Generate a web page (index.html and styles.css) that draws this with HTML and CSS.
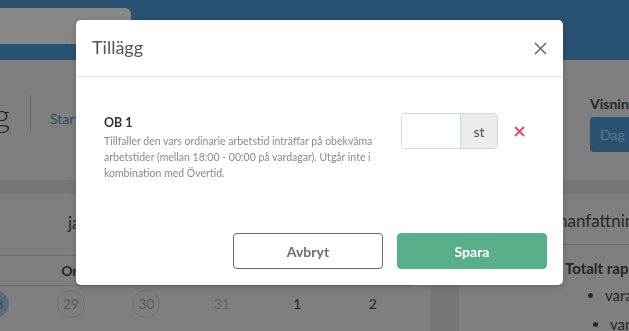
FILE: index.html
```html
<!DOCTYPE html>
<html lang="sv">
<head>
    <meta charset="UTF-8">
    <meta name="viewport" content="width=device-width, initial-scale=1.0">
    <title>Tidrapportering</title>
    <link rel="stylesheet" href="styles.css">
</head>
<body>
    <div class="page">
        <div class="topbar">
            <div class="search"></div>
        </div>

        <div class="subheader">
            <div class="page-title">Tidrapportering</div>
            <div class="divider"></div>
            <a class="crumb" href="#">Startsida</a>
            <div class="view">
                <div class="view-label">Visning</div>
                <button class="view-btn">Dag</button>
            </div>
        </div>

        <div class="content">
            <div class="card calendar">
                <div class="cal-title">januari 2022</div>
                <div class="cal-week cal-head">
                    <div>Mån</div><div></div><div>Ons</div><div>Tor</div><div>Fre</div><div>Lör</div><div>Sön</div>
                </div>
                <div class="cal-week">
                    <div><span class="day muted">27</span></div>
                    <div><span class="day ring selected">28</span></div>
                    <div><span class="day ring">29</span></div>
                    <div><span class="day ring">30</span></div>
                    <div><span class="day faint">31</span></div>
                    <div><span class="day">1</span></div>
                    <div><span class="day">2</span></div>
                </div>
            </div>

            <div class="card summary">
                <div class="summary-title">Sammanfattning dag</div>
                <div class="summary-body">
                    <div class="summary-total">Totalt rapporterat</div>
                    <ul>
                        <li>varav ordinarie tid</li>
                        <li class="shift">varav övertid</li>
                    </ul>
                </div>
            </div>
        </div>
    </div>

    <div class="backdrop"></div>

    <div class="modal">
        <div class="modal-header">
            <h2>Tillägg</h2>
            <button class="close" aria-label="Stäng">
                <svg width="13" height="13" viewBox="0 0 13 13"><path d="M1 1L12 12M12 1L1 12" stroke="#6b6b6b" stroke-width="1.6" fill="none"/></svg>
            </button>
        </div>
        <div class="modal-body">
            <div class="addition">
                <div class="addition-text">
                    <div class="addition-name">OB 1</div>
                    <div class="addition-desc">Tillfaller den vars ordinarie arbetstid inträffar på obekväma arbetstider (mellan 18:00 - 00:00 på vardagar). Utgår inte i kombination med Övertid.</div>
                </div>
                <div class="input-group">
                    <input type="text" class="qty">
                    <span class="addon">st</span>
                </div>
                <button class="remove" aria-label="Ta bort">
                    <svg width="11" height="11" viewBox="0 0 11 11"><path d="M1 1L10 10M10 1L1 10" stroke="#e3426f" stroke-width="1.8" fill="none"/></svg>
                </button>
            </div>
        </div>
        <div class="modal-footer">
            <button class="btn btn-cancel">Avbryt</button>
            <button class="btn btn-save">Spara</button>
        </div>
    </div>
</body>
</html>
```

FILE: styles.css
```css
body {
    margin: 0;
    font-family: Lato, 'Open Sans', sans-serif;
    background-color: #e1e1e1;
    overflow: hidden;
    height: 331px;
}

.page {
    width: 629px;
}

.topbar {
    height: 60px;
    background-color: #4f99d7;
    padding-top: 8px;
    box-sizing: border-box;
}

.search {
    width: 131px;
    height: 36px;
    background: #fff;
    border-radius: 0 6px 6px 0;
}

.subheader {
    height: 120px;
    background: #f0f0f0;
    display: flex;
    align-items: flex-start;
    padding-top: 35px;
    box-sizing: border-box;
}

.page-title {
    flex-shrink: 0;
    width: 230px;
    margin-left: -220px;
    text-align: right;
    font-size: 32px;
    font-weight: 300;
    color: #4b4b4b;
    white-space: nowrap;
    line-height: 40px;
}

.divider {
    width: 1px;
    height: 36px;
    background: #c8c8c8;
    margin: 0 19px 0 20px;
}

.crumb {
    color: #4f8fcc;
    font-size: 14px;
    text-decoration: none;
    line-height: 48px;
}

.view {
    margin-left: auto;
    width: 60px;
    margin-right: -21px;
}

.view-label {
    font-size: 14px;
    font-weight: 700;
    color: #4b4b4b;
    margin-bottom: 5px;
}

.view-btn {
    width: 60px;
    height: 35px;
    border: none;
    border-radius: 4px;
    background: #4f99d7;
    color: #b5ddff;
    font-family: inherit;
    font-size: 14px;
    text-align: left;
    padding-left: 10px;
}

.content {
    display: flex;
    gap: 29px;
    margin-left: -130px;
    padding-top: 14px;
}

.card {
    background: #f0f0f0;
    flex-shrink: 0;
}

.calendar {
    width: 560px;
    height: 200px;
    padding-left: 12px;
    box-sizing: border-box;
}

.cal-title {
    height: 61px;
    line-height: 58px;
    padding-left: 186px;
    font-size: 17px;
    color: #4b4b4b;
    border-bottom: 1px solid #cfcfcf;
}

.cal-week {
    display: grid;
    grid-template-columns: repeat(7, 75.5px);
    text-align: center;
}

.cal-head {
    height: 29px;
    line-height: 29px;
    font-size: 14px;
    font-weight: 700;
    color: #4b4b4b;
    border-bottom: 1px solid #cfcfcf;
    margin-right: 18px;
}

.cal-head div:nth-child(3) {
    padding-left: 6px;
}

.cal-week .day {
    display: inline-block;
    width: 28px;
    height: 28px;
    line-height: 28px;
    margin-top: 4px;
    border-radius: 50%;
    font-size: 14px;
    color: #4b4b4b;
    box-sizing: border-box;
}

.day.ring {
    border: 1.5px solid #c4dccf;
    line-height: 25px;
    color: #a9a9a9;
}

.day.selected {
    background: #a9cbe8;
    border-color: #a9cbe8;
    color: #6f8ea8;
}

.day.faint,
.day.muted {
    color: #b9b9b9;
}

.summary {
    width: 300px;
    height: 200px;
}

.summary-title {
    height: 50px;
    line-height: 54px;
    padding-left: 63px;
    font-size: 17px;
    color: #4b4b4b;
    border-bottom: 1px solid #cfcfcf;
    white-space: nowrap;
}

.summary-body {
    padding-left: 106px;
    padding-top: 14px;
    color: #4b4b4b;
}

.summary-total {
    font-size: 15px;
    font-weight: 700;
    white-space: nowrap;
}

.summary-body ul {
    margin: 9px 0 0;
    padding-left: 40px;
    font-size: 15px;
    white-space: nowrap;
}

.summary-body li {
    height: 29px;
}

.summary-body li.shift {
    margin-left: 5px;
}

.backdrop {
    position: fixed;
    inset: 0;
    background: rgba(0, 0, 0, 0.47);
}

.modal {
    position: absolute;
    top: 20px;
    left: 76px;
    width: 487px;
    background: #fff;
    border-radius: 5px;
    box-shadow: 0 2px 6px rgba(0, 0, 0, 0.2);
}

.modal-header {
    height: 56px;
    display: flex;
    align-items: center;
    justify-content: space-between;
    padding: 0 16px 0 16px;
    border-bottom: 1px solid #e5e5e5;
}

.modal-header h2 {
    margin: 0;
    font-size: 18px;
    font-weight: 400;
    color: #555;
    padding-bottom: 2px;
}

.close {
    border: none;
    background: none;
    padding: 0;
    width: 13px;
    height: 13px;
    display: flex;
}

.modal-body {
    height: 140px;
    padding: 36px 0 0 28px;
    box-sizing: border-box;
}

.addition {
    display: flex;
    align-items: flex-start;
}

.addition-text {
    width: 284px;
    margin-right: 13px;
}

.addition-name {
    font-size: 12.5px;
    font-weight: 700;
    color: #333;
    line-height: 16px;
    padding-top: 2px;
}

.addition-desc {
    font-size: 10.5px;
    line-height: 16px;
    color: #8a8a8a;
    margin-top: 2px;
}

.input-group {
    display: flex;
    height: 36px;
    border: 1px solid #d2d6da;
    border-radius: 4px;
    box-sizing: border-box;
    overflow: hidden;
}

.qty {
    width: 58px;
    border: none;
    border-right: 1px solid #d2d6da;
    padding: 0;
    outline: none;
}

.addon {
    width: 36px;
    background: #e9ecef;
    color: #555;
    font-size: 14px;
    display: flex;
    align-items: center;
    justify-content: center;
}

.remove {
    border: none;
    background: none;
    padding: 0;
    margin: 13px 0 0 16px;
    width: 11px;
    height: 11px;
    display: flex;
}

.modal-footer {
    display: flex;
    justify-content: flex-end;
    gap: 14px;
    padding: 16px 16px 16px 0;
}

.btn {
    width: 150px;
    height: 36px;
    border-radius: 4px;
    font-family: inherit;
    font-size: 14px;
    font-weight: 700;
}

.btn-cancel {
    background: #fff;
    border: 1px solid #6c6c72;
    color: #6c6c72;
}

.btn-save {
    background: #5aaf8b;
    border: 1px solid #5aaf8b;
    color: #fff;
}
```
